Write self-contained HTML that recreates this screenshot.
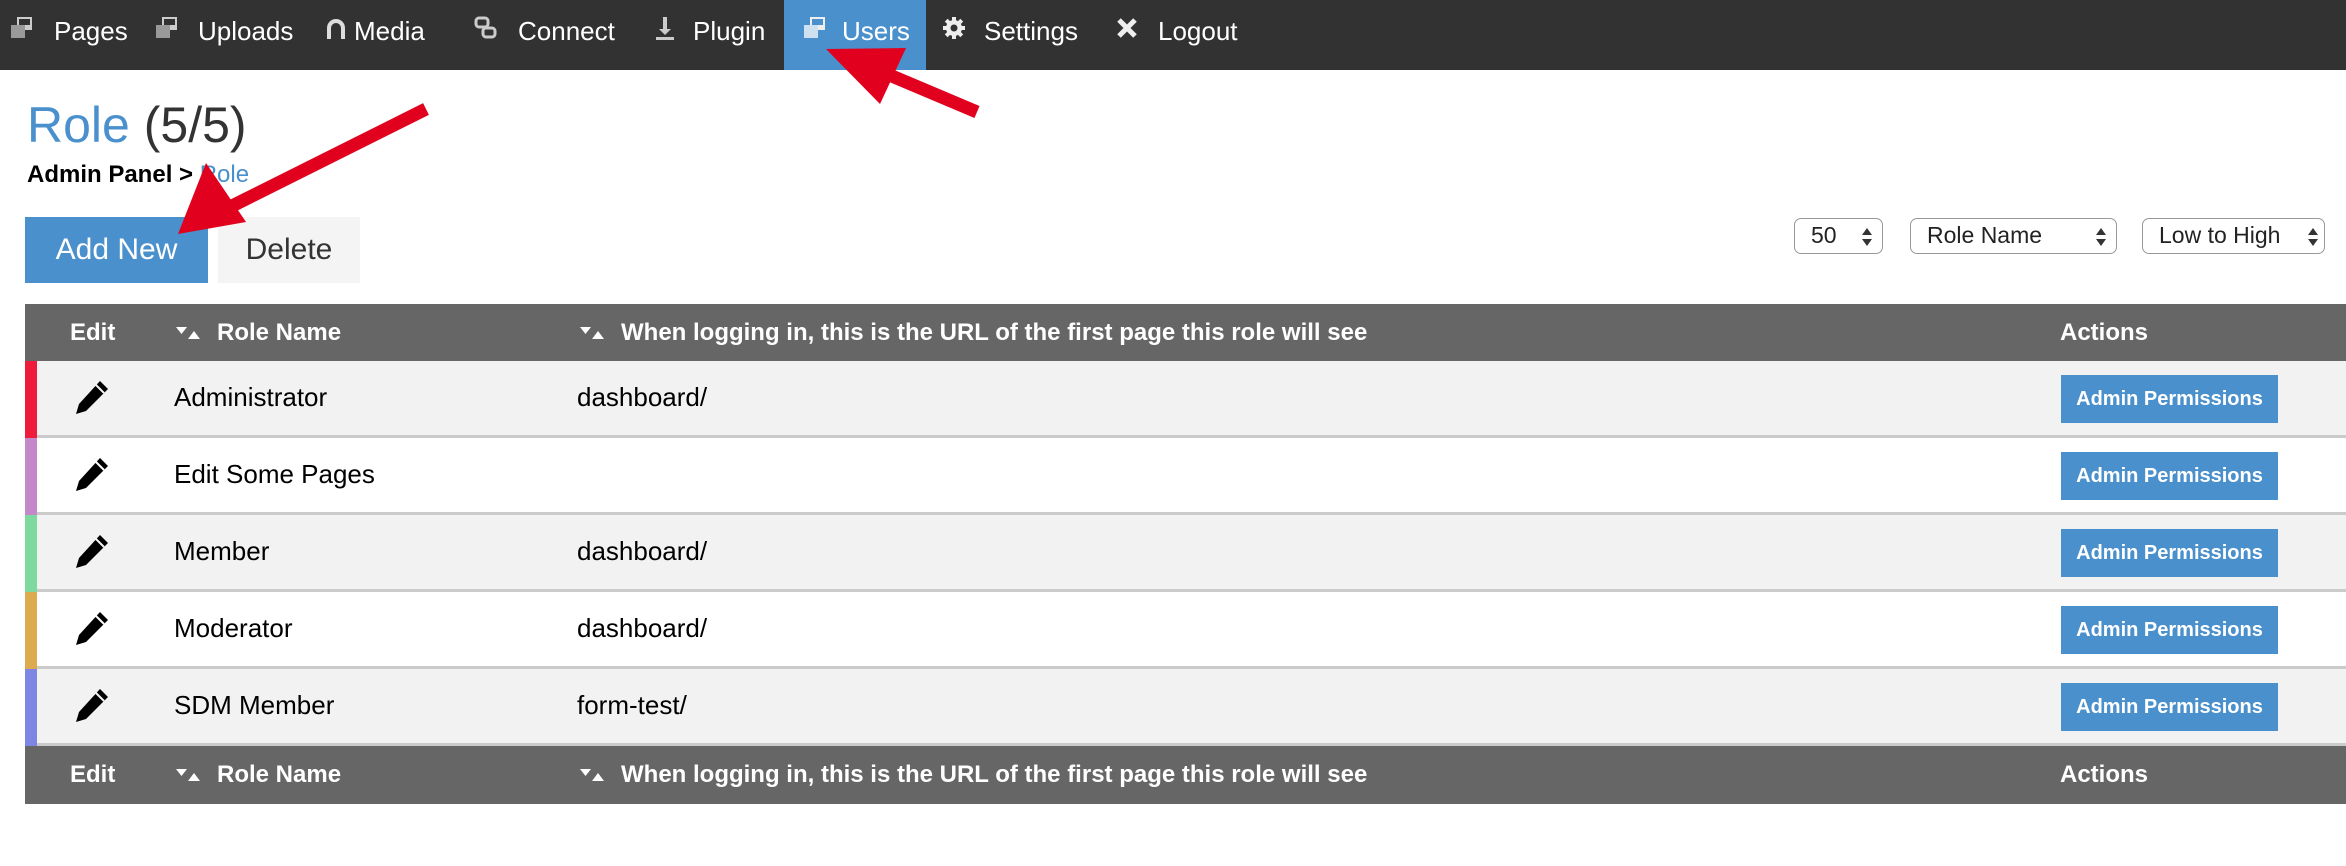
<!DOCTYPE html>
<html><head><meta charset="utf-8"><style>
*{margin:0;padding:0;box-sizing:border-box}
body{width:2346px;height:866px;background:#fff;font-family:"Liberation Sans",sans-serif;position:relative;overflow:hidden;color:#000}
.nav{position:absolute;left:0;top:0;width:2346px;height:70px;background:#323232}
.nav .it{position:absolute;top:0;height:70px;color:#fff;font-size:26px;line-height:62px}
.nav .act{position:absolute;left:784px;top:0;width:142px;height:70px;background:#4a90cc}
.ic{position:absolute;top:16px}
h1{position:absolute;left:27px;top:95px;font-size:50px;font-weight:normal;color:#333;line-height:60px}
h1 span{color:#4a90cc}
.bc{position:absolute;left:27px;top:160px;font-size:24px;font-weight:bold;line-height:30px}
.bc span{color:#4a90cc;font-weight:normal}
.btn{position:absolute;top:217px;height:66px;font-size:30px;line-height:66px;text-align:center}
.sel{position:absolute;top:218px;height:36px;border:1.5px solid #999;border-radius:7px;font-size:23px;line-height:33px;padding-left:16px;color:#222;background:#fff}
.sel svg{position:absolute;right:9px;top:8px}
.hd{position:absolute;left:25px;width:2321px;height:58px;background:#666;color:#fff;font-weight:bold;font-size:24px;line-height:58px}
.hd span,.row span{position:absolute;top:0}
.hd svg{position:absolute;top:22px}
.row{position:absolute;left:25px;width:2321px;height:77px;font-size:26px;line-height:72px;border-bottom:3px solid #cbcbcb}
.bar{position:absolute;left:0;top:0;width:12px;height:77px}
.ap{position:absolute;left:2036px;top:14px;width:217px;height:48px;background:#4a90cc;color:#fff;font-weight:bold;font-size:20px;line-height:48px;text-align:center}
.pen{position:absolute;left:46px;top:17px}
</style></head><body>
<div class="nav">
<div class="act"></div>
<svg class="ic" style="left:10px" width="24" height="24" viewBox="0 0 24 24"><rect x="7" y="1" width="15" height="13" fill="#ccc"/><rect x="1" y="9" width="14" height="13" fill="#999"/><rect x="9" y="3" width="11" height="6" fill="#323232"/></svg>
<div class="it" style="left:54px">Pages</div>
<svg class="ic" style="left:155px" width="24" height="24" viewBox="0 0 24 24"><rect x="7" y="1" width="15" height="13" fill="#ccc"/><rect x="1" y="9" width="14" height="13" fill="#999"/><rect x="9" y="3" width="11" height="6" fill="#323232"/></svg>
<div class="it" style="left:198px">Uploads</div>
<svg class="ic" style="left:326px;top:18px" width="20" height="22" viewBox="0 0 20 22"><path d="M3 21V10a7 7 0 0 1 14 0v11" fill="none" stroke="#ddd" stroke-width="4"/></svg>
<div class="it" style="left:354px">Media</div>
<svg class="ic" style="left:474px" width="24" height="26" viewBox="0 0 24 26"><rect x="2" y="2" width="12" height="9" rx="3" fill="none" stroke="#ccc" stroke-width="3"/><rect x="9" y="12" width="12" height="9" rx="3" fill="none" stroke="#ccc" stroke-width="3"/></svg>
<div class="it" style="left:518px">Connect</div>
<svg class="ic" style="left:654px" width="22" height="26" viewBox="0 0 22 26"><rect x="9" y="1" width="4" height="16" fill="#ccc"/><path d="M5 13h12l-6 6z" fill="#ccc"/><rect x="2" y="21" width="18" height="3" fill="#ccc"/></svg>
<div class="it" style="left:693px">Plugin</div>
<svg class="ic" style="left:803px" width="24" height="24" viewBox="0 0 24 24"><rect x="7" y="1" width="15" height="13" fill="#eee"/><rect x="1" y="9" width="14" height="13" fill="#cfe0f0"/><rect x="9" y="3" width="11" height="6" fill="#4a90cc"/></svg>
<div class="it" style="left:842px">Users</div>
<svg class="ic" style="left:942px" width="24" height="24" viewBox="0 0 24 24"><g fill="#eee"><circle cx="12" cy="12" r="8"/><rect x="10" y="1" width="4" height="22"/><rect x="1" y="10" width="22" height="4"/><rect x="10" y="1" width="4" height="22" transform="rotate(45 12 12)"/><rect x="10" y="1" width="4" height="22" transform="rotate(-45 12 12)"/></g><circle cx="12" cy="12" r="3.5" fill="#323232"/></svg>
<div class="it" style="left:984px">Settings</div>
<svg class="ic" style="left:1116px" width="22" height="24" viewBox="0 0 22 22"><path d="M3 3L19 19M19 3L3 19" stroke="#eee" stroke-width="5"/></svg>
<div class="it" style="left:1158px">Logout</div>
</div>

<h1><span>Role</span> (5/5)</h1>
<div class="bc">Admin Panel &gt; <span>Role</span></div>
<div class="btn" style="left:25px;width:183px;background:#4a90cc;color:#fff">Add New</div>
<div class="btn" style="left:218px;width:142px;background:#f4f4f4;color:#333">Delete</div>
<div class="sel" style="left:1794px;width:89px">50<svg width="12" height="20" viewBox="0 0 12 20"><path d="M6 1L11 8H1zM6 19L11 12H1z" fill="#333"/></svg></div>
<div class="sel" style="left:1910px;width:207px">Role Name<svg width="12" height="20" viewBox="0 0 12 20"><path d="M6 1L11 8H1zM6 19L11 12H1z" fill="#333"/></svg></div>
<div class="sel" style="left:2142px;width:183px;padding-left:16px">Low to High<svg style="right:5px" width="12" height="20" viewBox="0 0 12 20"><path d="M6 1L11 8H1zM6 19L11 12H1z" fill="#333"/></svg></div>

<div class="hd" style="top:304px"><span style="left:45px">Edit</span><svg style="left:150px" width="26" height="14" viewBox="0 0 26 14"><path d="M1 1h11L6.5 8z" fill="#fff"/><path d="M19 5L25 13H13z" fill="#fff"/></svg><span style="left:192px">Role Name</span><svg style="left:554px" width="26" height="14" viewBox="0 0 26 14"><path d="M1 1h11L6.5 8z" fill="#fff"/><path d="M19 5L25 13H13z" fill="#fff"/></svg><span style="left:596px">When logging in, this is the URL of the first page this role will see</span><span style="left:2035px">Actions</span></div>

<div class="row" style="top:361px;background:#f2f2f2"><div class="bar" style="background:#ee1c3a"></div><svg class="pen" width="40" height="40" viewBox="0 0 40 40"><path d="M29 3l8 8-22 22-10 3 3-10z" fill="#000"/><path d="M25 7l8 8" stroke="#f2f2f2" stroke-width="2"/></svg><span style="left:149px">Administrator</span><span style="left:552px">dashboard/</span><div class="ap">Admin Permissions</div></div>
<div class="row" style="top:438px;background:#fff"><div class="bar" style="background:#c487c9"></div><svg class="pen" width="40" height="40" viewBox="0 0 40 40"><path d="M29 3l8 8-22 22-10 3 3-10z" fill="#000"/><path d="M25 7l8 8" stroke="#fff" stroke-width="2"/></svg><span style="left:149px">Edit Some Pages</span><div class="ap">Admin Permissions</div></div>
<div class="row" style="top:515px;background:#f2f2f2"><div class="bar" style="background:#7ed9a1"></div><svg class="pen" width="40" height="40" viewBox="0 0 40 40"><path d="M29 3l8 8-22 22-10 3 3-10z" fill="#000"/><path d="M25 7l8 8" stroke="#f2f2f2" stroke-width="2"/></svg><span style="left:149px">Member</span><span style="left:552px">dashboard/</span><div class="ap">Admin Permissions</div></div>
<div class="row" style="top:592px;background:#fff"><div class="bar" style="background:#deaa50"></div><svg class="pen" width="40" height="40" viewBox="0 0 40 40"><path d="M29 3l8 8-22 22-10 3 3-10z" fill="#000"/><path d="M25 7l8 8" stroke="#fff" stroke-width="2"/></svg><span style="left:149px">Moderator</span><span style="left:552px">dashboard/</span><div class="ap">Admin Permissions</div></div>
<div class="row" style="top:669px;background:#f2f2f2"><div class="bar" style="background:#7d87e3"></div><svg class="pen" width="40" height="40" viewBox="0 0 40 40"><path d="M29 3l8 8-22 22-10 3 3-10z" fill="#000"/><path d="M25 7l8 8" stroke="#f2f2f2" stroke-width="2"/></svg><span style="left:149px">SDM Member</span><span style="left:552px">form-test/</span><div class="ap">Admin Permissions</div></div>

<div class="hd" style="top:746px"><span style="left:45px">Edit</span><svg style="left:150px" width="26" height="14" viewBox="0 0 26 14"><path d="M1 1h11L6.5 8z" fill="#fff"/><path d="M19 5L25 13H13z" fill="#fff"/></svg><span style="left:192px">Role Name</span><svg style="left:554px" width="26" height="14" viewBox="0 0 26 14"><path d="M1 1h11L6.5 8z" fill="#fff"/><path d="M19 5L25 13H13z" fill="#fff"/></svg><span style="left:596px">When logging in, this is the URL of the first page this role will see</span><span style="left:2035px">Actions</span></div>

<svg style="position:absolute;left:0;top:0" width="2346" height="866">
<g fill="#e1001e" stroke="#e1001e">
<line x1="426" y1="109" x2="230" y2="207" stroke-width="13"/>
<path d="M178 234L206 163L246 222Z" stroke="none"/>
<line x1="977" y1="112" x2="880" y2="71" stroke-width="13"/>
<path d="M826 49L906 48L880 104Z" stroke="none"/>
</g>
</svg>
</body></html>
